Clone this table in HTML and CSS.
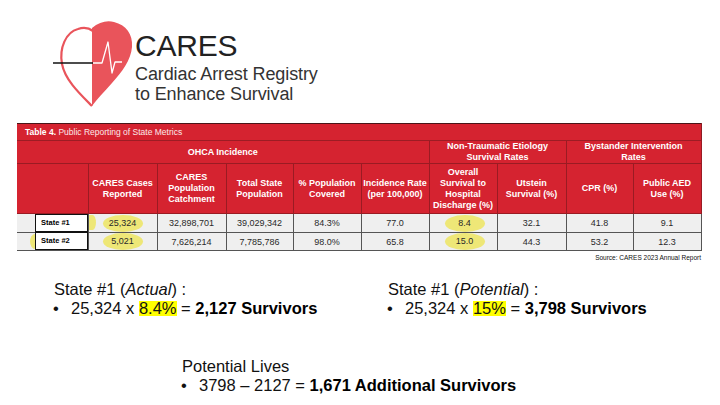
FILE: index.html
```html
<!DOCTYPE html>
<html lang="en">
<head>
<meta charset="utf-8">
<title>CARES State Metrics</title>
<link rel="stylesheet" href="styles.css">
</head>
<body>
<div class="slide">
  <header class="logo">
    <svg class="heart" viewBox="0 0 82 88" width="82" height="88" aria-hidden="true">
      <path d="M40 8 C47 2 55 0 62 2 C74 5 81 14 80 27 C79 40 70 52 60 63 C52 72 45 79 40 86 Z" fill="#e9545b"/>
      <path d="M40 86 C28 74 13 60 10 44 C7 28 14 12 26 9 C32 7 37 8 41 11" fill="none" stroke="#e9545b" stroke-width="2.2"/>
      <line x1="1" y1="43" x2="41" y2="43" stroke="#111" stroke-width="1.3"/>
      <polyline points="41,43 50,43 56,22 60,53 63,42 70,42" fill="none" stroke="#fff" stroke-width="1.3" stroke-linejoin="round"/>
    </svg>
    <div class="brand">
      <div class="brand-name">CARES</div>
      <div class="brand-sub">Cardiac Arrest Registry<br>to Enhance Survival</div>
    </div>
  </header>

  <table class="metrics">
    <colgroup>
      <col style="width:71px"><col style="width:69px"><col style="width:69px"><col style="width:67px"><col style="width:68px">
      <col style="width:68px"><col style="width:68px"><col style="width:69px"><col style="width:67px"><col style="width:68px">
    </colgroup>
    <tr class="r-title"><td colspan="10" class="title"><b>Table 4.</b> Public Reporting of State Metrics</td></tr>
    <tr class="r-group">
      <th colspan="6">OHCA Incidence</th>
      <th colspan="2">Non-Traumatic Etiology<br>Survival Rates</th>
      <th colspan="2">Bystander Intervention<br>Rates</th>
    </tr>
    <tr class="r-head">
      <th></th>
      <th>CARES Cases<br>Reported</th>
      <th>CARES<br>Population<br>Catchment</th>
      <th>Total State<br>Population</th>
      <th>% Population<br>Covered</th>
      <th>Incidence Rate<br>(per 100,000)</th>
      <th>Overall<br>Survival to<br>Hospital<br>Discharge (%)</th>
      <th>Utstein<br>Survival (%)</th>
      <th>CPR (%)</th>
      <th>Public AED<br>Use (%)</th>
    </tr>
    <tr class="r-data r1">
      <td class="state"><span class="state-box">State #1</span></td>
      <td class="stray-left"><span class="oval">25,324</span></td>
      <td>32,898,701</td>
      <td>39,029,342</td>
      <td>84.3%</td>
      <td>77.0</td>
      <td><span class="oval wide">8.4</span></td>
      <td>32.1</td>
      <td>41.8</td>
      <td>9.1</td>
    </tr>
    <tr class="r-data r2">
      <td class="state stray-state"><span class="state-box">State #2</span></td>
      <td><span class="oval">5,021</span></td>
      <td>7,626,214</td>
      <td>7,785,786</td>
      <td>98.0%</td>
      <td>65.8</td>
      <td><span class="oval wide">15.0</span></td>
      <td>44.3</td>
      <td>53.2</td>
      <td>12.3</td>
    </tr>
  </table>
  <p class="source">Source: CARES 2023 Annual Report</p>

  <section class="calc">
    <div class="calc-block">
      <div class="calc-head">State #1 (<i>Actual</i>) :</div>
      <div class="calc-line"><span class="bullet">•</span>25,324 x <span class="hl">8.4%</span> = <b>2,127 Survivors</b></div>
    </div>
    <div class="calc-block">
      <div class="calc-head">State #1 (<i>Potential</i>) :</div>
      <div class="calc-line"><span class="bullet">•</span>25,324 x <span class="hl">15%</span> = <b>3,798 Survivors</b></div>
    </div>
  </section>

  <section class="lives">
    <div class="calc-head">Potential Lives</div>
    <div class="calc-line"><span class="bullet">•</span>3798 – 2127 = <b>1,671 Additional Survivors</b></div>
  </section>
</div>
</body>
</html>
```

FILE: styles.css
```css
html, body {
  margin: 0;
  padding: 0;
  background: #fff;
}
body {
  font-family: "Liberation Sans", Arial, sans-serif;
  color: #111;
}
.slide {
  width: 720px;
  height: 405px;
  overflow: hidden;
  display: flex;
  flex-direction: column;
}

/* Logo */
.logo {
  display: flex;
  align-items: flex-start;
  height: 123px;
  flex: none;
  box-sizing: border-box;
  padding: 20px 0 0 52px;
}
.heart {
  display: block;
  flex: none;
}
.brand {
  margin: 11px 0 0 1px;
}
.brand-name {
  font-size: 30px;
  line-height: 30px;
  color: #222;
  letter-spacing: -0.2px;
}
.brand-sub {
  margin-top: 3px;
  font-size: 18px;
  line-height: 20px;
  color: #333;
  letter-spacing: -0.1px;
}

/* Table */
.metrics {
  margin-left: 17px;
  width: 684px;
  table-layout: fixed;
  border-collapse: collapse;
  font-family: "Liberation Sans", Arial, sans-serif;
}
.metrics td, .metrics th {
  padding: 0;
  text-align: center;
  vertical-align: middle;
}
.r-title td {
  height: 16px;
  background: #d52330;
  color: #fbe9ea;
  font-size: 8.5px;
  text-align: left;
  padding-left: 8px;
  border-top: 1.5px solid #4a1518;
  border-right: 1px solid #8e1b22;
  border-bottom: 1px solid #9c1c24;
}
.r-title b {
  color: #fff;
}
.r-group th, .r-head th {
  background: #d52330;
  color: #fff;
  font-weight: bold;
  font-size: 9px;
  line-height: 11px;
  border: 1px solid #9a1b23;
  border-left: none;
}
.r-group th {
  height: 22px;
}
.r-head th {
  height: 49px;
}
.r-data td {
  background: #efefef;
  color: #2a2a2a;
  font-size: 9px;
  border-bottom: 1px solid #555;
  border-right: 1px solid #555;
  position: relative;
}
.r-data.r1 td {
  height: 17px;
}
.r-data.r2 td {
  height: 16px;
}
.r-data td.state {
  text-align: left;
  padding-left: 18px;
}
.state-box {
  display: block;
  box-sizing: border-box;
  width: 53px;
  height: 18px;
  line-height: 15px;
  padding-left: 5px;
  background: #fff;
  border: 1.5px solid #111;
  font-size: 7.5px;
  font-weight: bold;
  color: #000;
  position: relative;
  z-index: 1;
}
.r2 .state-box {
  margin-top: -1px;
}
.oval {
  display: inline-block;
  min-width: 40px;
  height: 17px;
  line-height: 17px;
  border-radius: 50%;
  background: #eee777;
}
.oval.wide {
  margin-left: 3px;
}
.stray-left::before {
  content: "";
  position: absolute;
  left: 0;
  top: 1px;
  width: 7px;
  height: 15px;
  background: #eee777;
  border-radius: 0 50% 50% 0;
}
.stray-state::before {
  content: "";
  position: absolute;
  left: 13px;
  top: 1px;
  width: 10px;
  height: 15px;
  background: #eee777;
  border-radius: 50%;
}
.source {
  margin: 2px 0 0 17px;
  width: 684px;
  text-align: right;
  font-size: 6.5px;
  line-height: 9px;
  color: #111;
}

/* Calculations */
.calc {
  display: grid;
  grid-template-columns: 334px 1fr;
  padding-left: 54px;
  margin-top: 18px;
}
.calc-head, .calc-line {
  font-size: 16.5px;
  line-height: 18.5px;
  color: #111;
  white-space: nowrap;
}
.calc-line b {
  color: #000;
}
.bullet {
  display: inline-block;
  width: 18px;
  margin-left: -1px;
}
.hl {
  background: linear-gradient(#ffff00, #ffff00) no-repeat 0 2px / 100% 15px;
}
.lives {
  padding-left: 182px;
  margin-top: 40px;
}
```
